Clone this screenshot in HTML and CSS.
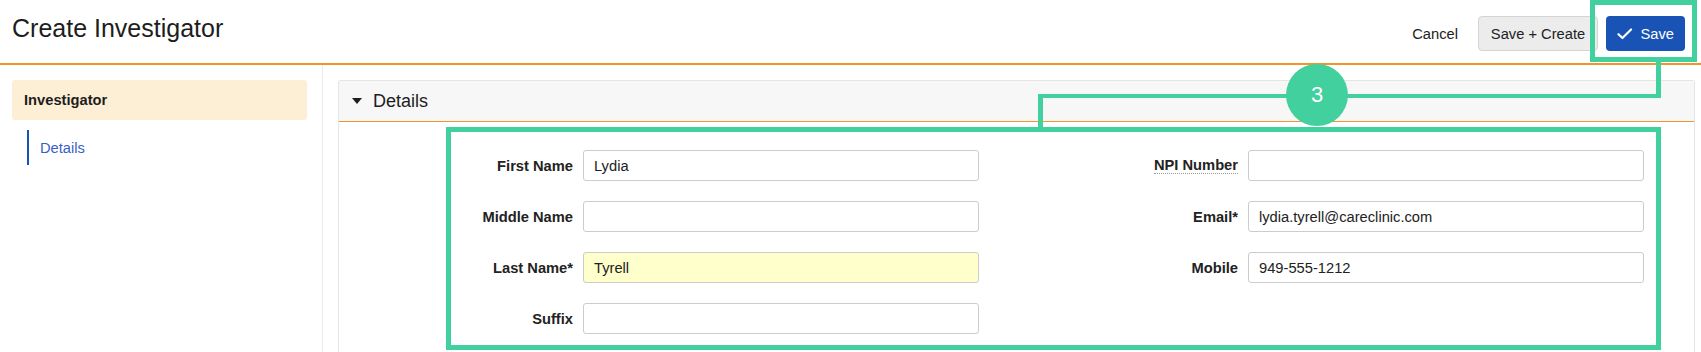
FILE: index.html
```html
<!DOCTYPE html>
<html lang="en">
<head>
<meta charset="utf-8">
<title>Create Investigator</title>
<link rel="stylesheet" href="styles.css">
</head>
<body>
<header class="topbar">
  <h1 class="title">Create Investigator</h1>
  <div class="actions">
    <button class="btn btn-link">Cancel</button>
    <button class="btn btn-default">Save + Create</button>
    <button class="btn btn-primary">
      <svg class="check" width="16" height="12" viewBox="0 0 16 12"><path d="M1.5 6.2 L5.6 10.2 L14.5 1.3" fill="none" stroke="#fff" stroke-width="2.2" stroke-linecap="round" stroke-linejoin="round"/></svg>
      <span>Save</span>
    </button>
  </div>
</header>
<div class="layout">
  <aside class="sidebar">
    <div class="side-item">Investigator</div>
    <a class="side-link">Details</a>
  </aside>
  <main class="main">
    <section class="panel">
      <div class="panel-head">
        <span class="caret"></span>
        <span class="panel-title">Details</span>
      </div>
      <div class="panel-body">
        <div class="col">
          <label class="lbl">First Name</label>
          <div class="inp">Lydia</div>
          <label class="lbl">Middle Name</label>
          <div class="inp"></div>
          <label class="lbl">Last Name*</label>
          <div class="inp inp-req">Tyrell</div>
          <label class="lbl">Suffix</label>
          <div class="inp"></div>
        </div>
        <div class="col">
          <label class="lbl"><span class="abbr">NPI Number</span></label>
          <div class="inp"></div>
          <label class="lbl">Email*</label>
          <div class="inp">lydia.tyrell@careclinic.com</div>
          <label class="lbl">Mobile</label>
          <div class="inp">949-555-1212</div>
        </div>
      </div>
    </section>
  </main>
</div>

<div class="ann ann-savebox"></div>
<div class="ann ann-vline-right"></div>
<div class="ann ann-hline"></div>
<div class="ann ann-vline-left"></div>
<div class="ann ann-formbox"></div>
<div class="ann ann-badge">3</div>
</body>
</html>
```

FILE: styles.css
```css
* { box-sizing: border-box; }

html, body {
  margin: 0;
  padding: 0;
  background: #fff;
  color: #222;
  font-family: "Liberation Sans", Arial, sans-serif;
  font-size: 14.7px;
}

body { position: relative; height: 352px; overflow: hidden; }

.topbar {
  height: 65px;
  border-bottom: 2px solid #f0952a;
  display: flex;
  justify-content: space-between;
  align-items: flex-start;
  padding: 0 16px 0 12px;
}

.title {
  margin: 16px 0 0 0;
  font-size: 25px;
  line-height: 25px;
  font-weight: normal;
  color: #1d1d1d;
}

.actions {
  margin-top: 16px;
  display: flex;
  gap: 8px;
}

.btn {
  height: 35px;
  font-family: inherit;
  font-size: 14.7px;
  border-radius: 4px;
  display: flex;
  align-items: center;
  white-space: nowrap;
  cursor: pointer;
}

.btn-link {
  background: transparent;
  border: none;
  color: #222;
  padding: 0 12px;
}

.btn-default {
  background: #ececec;
  border: 1px solid #d4d4d4;
  color: #222;
  padding: 0 8px;
  width: 120px;
  justify-content: center;
}

.btn-primary {
  background: #1a53b6;
  border: none;
  color: #fff;
  padding: 0 11px;
  gap: 8px;
  width: 79px;
}

.check { display: block; }

.layout {
  display: flex;
  height: 287px;
}

.sidebar {
  width: 323px;
  flex: none;
  border-right: 1px solid #ebebeb;
  padding: 15px 15px 0 12px;
}

.side-item {
  height: 40px;
  background: #fdefd6;
  border-radius: 3px;
  padding-left: 12px;
  display: flex;
  align-items: center;
  font-weight: bold;
  color: #1d1d1d;
}

.side-link {
  display: flex;
  align-items: center;
  margin: 10px 0 0 15px;
  height: 35px;
  border-left: 2px solid #1a53b6;
  padding-left: 11px;
  color: #3a5ec6;
}

.main {
  flex: 1;
  display: flex;
  flex-direction: column;
  padding: 15px 6px 0 15px;
}

.panel {
  flex: 1;
  border: 1px solid #e5e5e5;
  border-bottom: none;
  border-radius: 3px 3px 0 0;
}

.panel-head {
  height: 41px;
  background: #f7f7f7;
  border-bottom: 1px solid #f0952a;
  display: flex;
  align-items: center;
  padding-left: 13px;
  gap: 11px;
}

.caret {
  width: 0;
  height: 0;
  border-left: 5.5px solid transparent;
  border-right: 5.5px solid transparent;
  border-top: 6px solid #1d1d1d;
}

.panel-title {
  font-size: 18px;
  color: #1d1d1d;
}

.panel-body {
  display: flex;
  gap: 59px;
  padding: 28px 0 0 34px;
}

.col {
  display: grid;
  grid-template-columns: 200px 396px;
  grid-auto-rows: 31px;
  column-gap: 10px;
  row-gap: 20px;
  align-content: start;
}

.lbl {
  display: flex;
  align-items: center;
  justify-content: flex-end;
  font-weight: bold;
  color: #222;
}

.abbr {
  border-bottom: 1px dotted #999;
}

.inp {
  border: 1px solid #cccccc;
  border-radius: 3px;
  background: #fff;
  display: flex;
  align-items: center;
  padding: 0 10px;
  color: #222;
}

.inp-req { background: #ffffcc; }

.ann {
  position: absolute;
  box-sizing: border-box;
}

.ann-savebox {
  left: 1590px; top: 0; width: 107px; height: 62px;
  border: 5px solid #42d09e;
}

.ann-vline-right {
  left: 1656px; top: 60px; width: 5px; height: 38px;
  background: #42d09e;
}

.ann-hline {
  left: 1038px; top: 94px; width: 623px; height: 4px;
  background: #42d09e;
}

.ann-vline-left {
  left: 1038px; top: 94px; width: 5px; height: 36px;
  background: #42d09e;
}

.ann-formbox {
  left: 446px; top: 127px; width: 1215px; height: 223px;
  border: 5px solid #42d09e;
}

.ann-badge {
  left: 1286px; top: 64px; width: 62px; height: 62px;
  border-radius: 50%;
  background: #42d09e;
  color: #fff;
  font-size: 22px;
  display: flex;
  align-items: center;
  justify-content: center;
}
```
